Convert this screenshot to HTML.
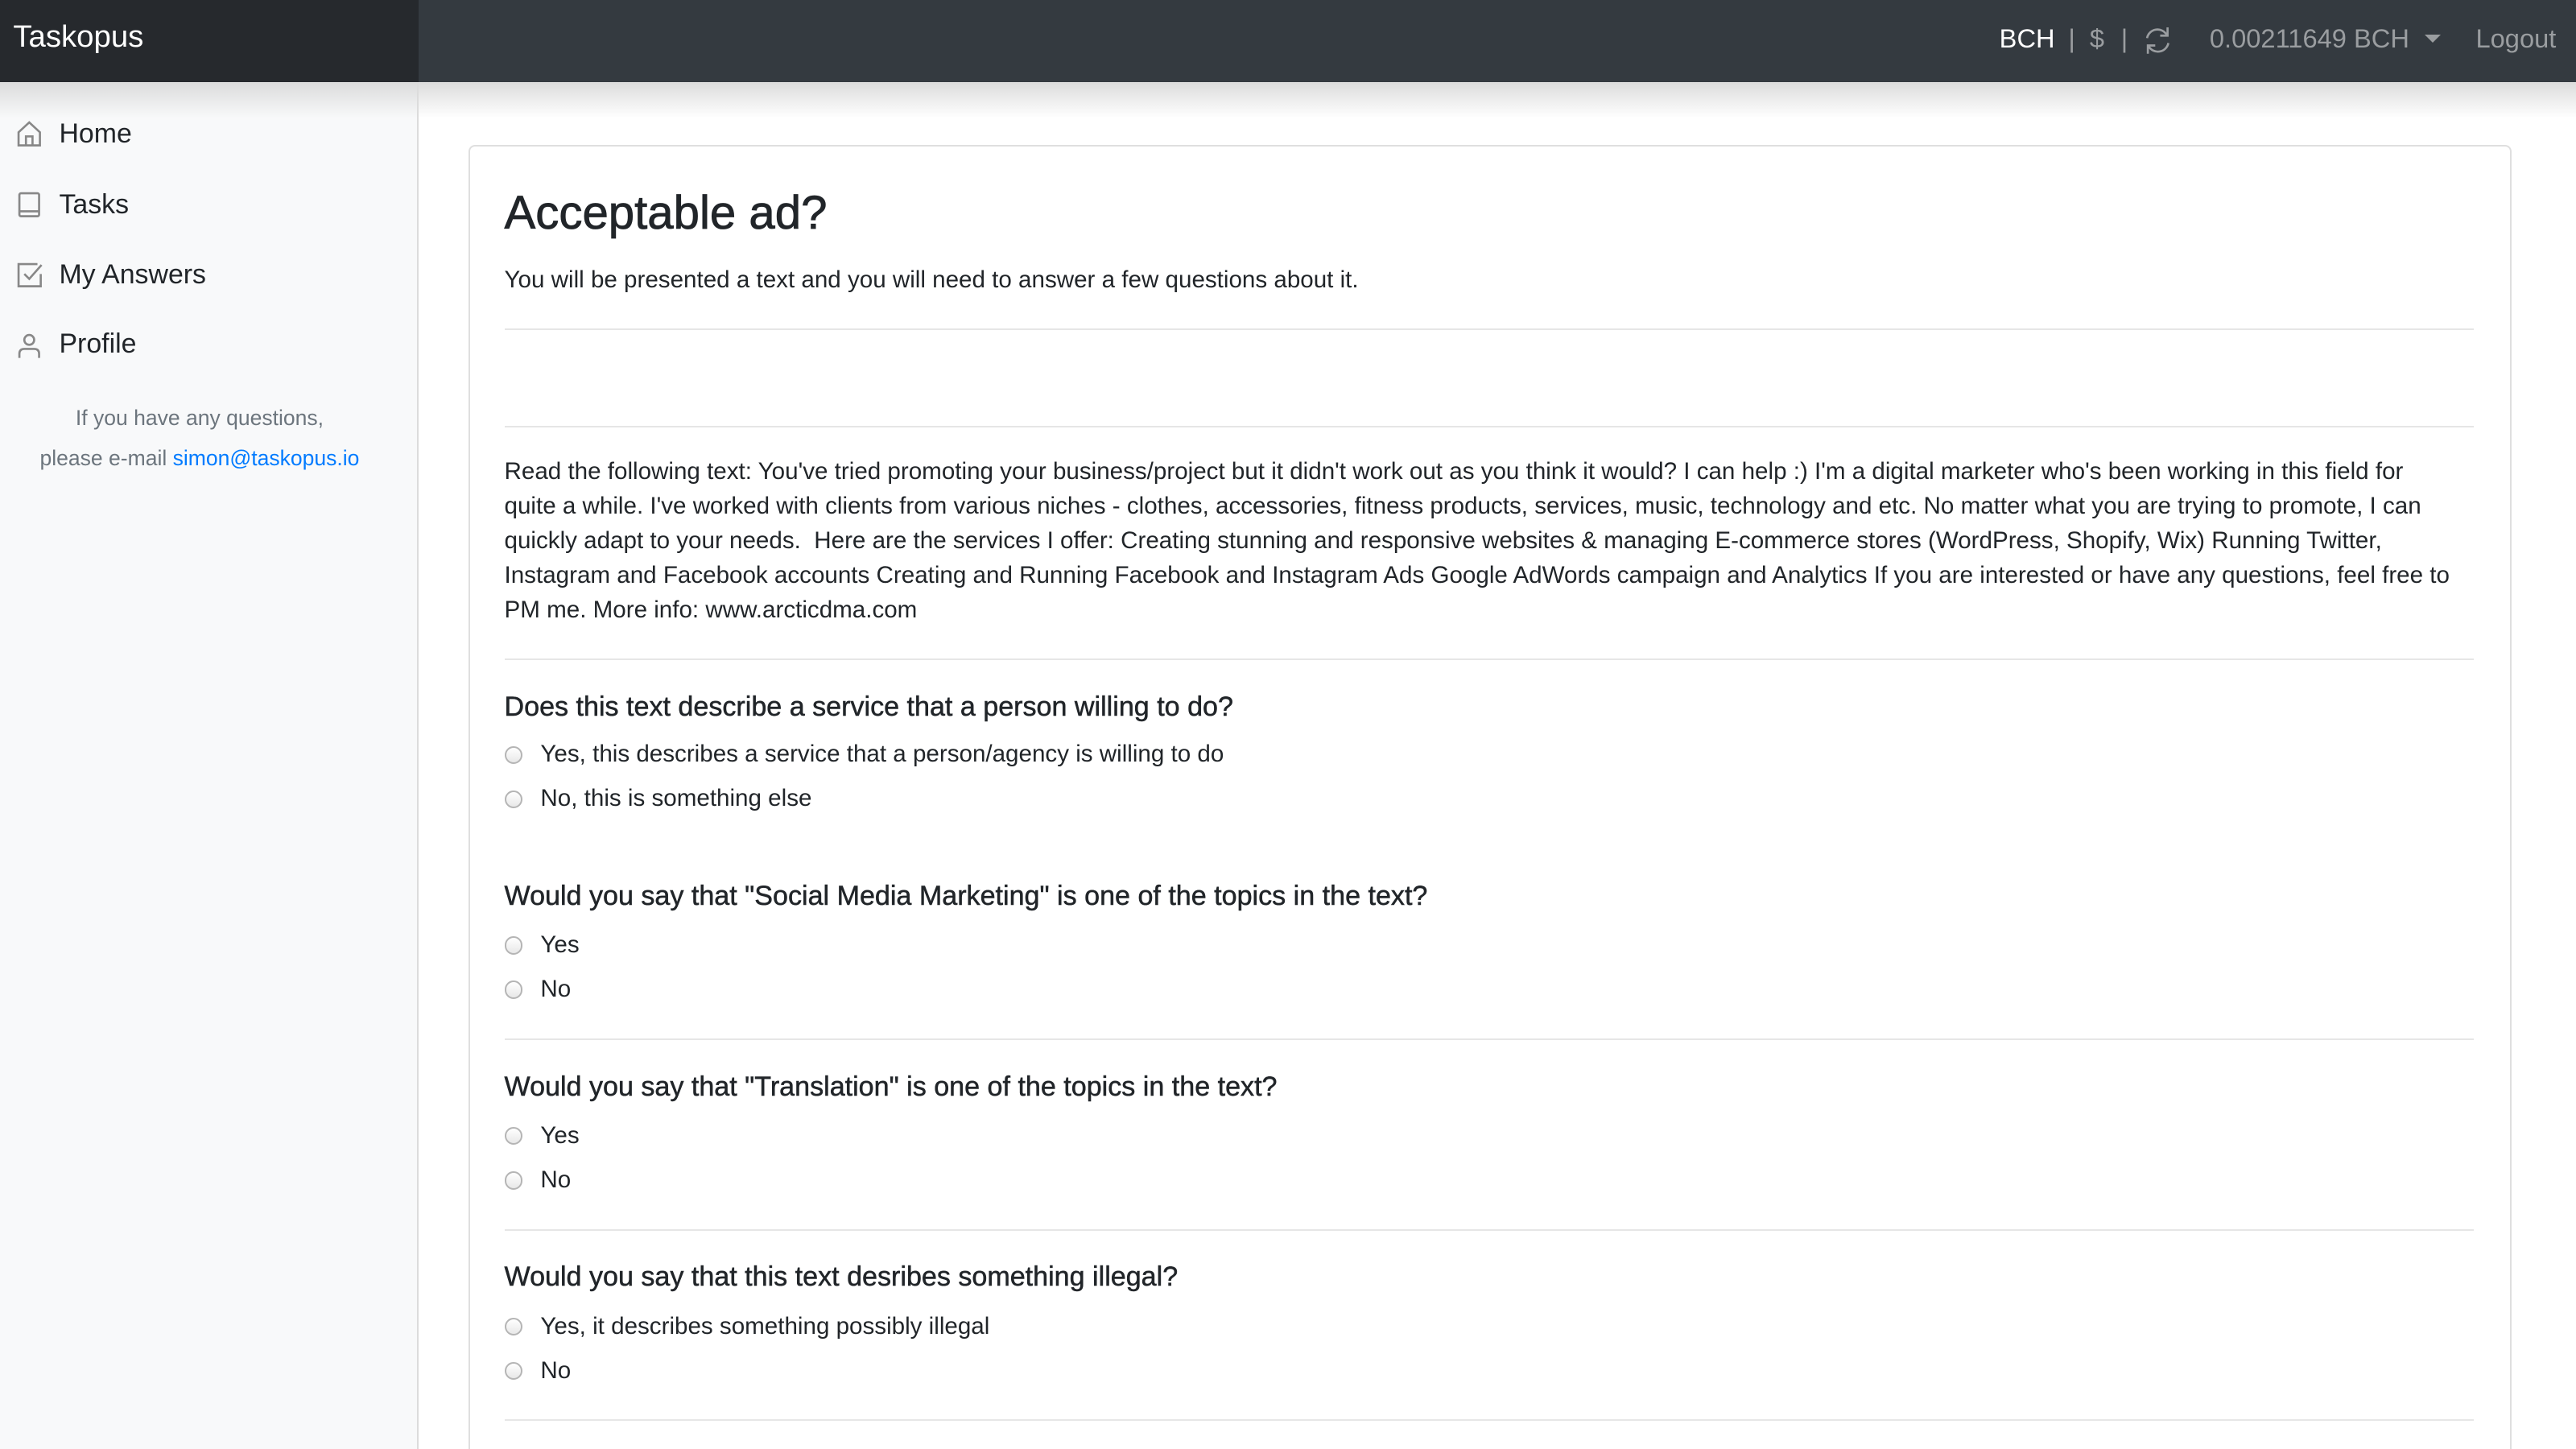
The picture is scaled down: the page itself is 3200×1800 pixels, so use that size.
<!DOCTYPE html>
<html><head><meta charset="utf-8"><style>
html{zoom:2.040816;height:882px;overflow:hidden}
*{margin:0;padding:0;box-sizing:border-box}
body{width:1568px;height:882px;overflow:hidden;background:#fff;font-family:"Liberation Sans",Arial,sans-serif;color:#212529;position:relative}
.top{position:absolute;left:0;top:0;width:1568px;height:50px;background:#343a40}
.brand{position:absolute;left:0;top:0;width:255px;height:50px;background:#26292d;color:#fff;font-size:18.8px;padding:12px 8px}
.shadow{position:absolute;left:0;top:50px;width:1568px;height:22px;background:linear-gradient(#dcdcdc,rgba(255,255,255,0));}
.side{position:absolute;left:0;top:50px;width:255px;height:832px;background:#f8f9fa;border-right:1px solid #dcdcdc}
.side .sh{position:absolute;left:0;top:0;width:254px;height:22px;background:linear-gradient(rgba(200,200,200,.6),rgba(248,249,250,0))}
.nav{position:absolute;left:36px;font-size:16.6px;color:#212529}
.ic{position:absolute;left:10px}
.help{position:absolute;left:0;width:243px;text-align:center;font-size:13px;color:#6c757d;line-height:24.5px;top:242px}
.help a{color:#007bff;text-decoration:none}
.tr{position:absolute;top:14px;font-size:16px;color:#9a9da0}
.card{position:absolute;left:285px;top:88px;width:1244px;height:820px;border:1px solid #dfdfdf;border-radius:4px;background:#fff}
.t{position:absolute;left:307px;white-space:nowrap}
.hr{position:absolute;left:307px;width:1199px;height:1px;background:#e6e6e6}
.p{font-size:14.5px;line-height:21px}
.q{font-size:16.7px;color:#212529;-webkit-text-stroke:0.25px #212529}
.r{position:absolute;left:307px;width:11px;height:11px;border-radius:50%;border:1px solid #b5b5b5;background:linear-gradient(#fff,#e8e8e8)}
</style></head><body>
<div class="top"></div>
<div class="brand">Taskopus</div>
<div class="shadow"></div>
<div class="side"><div class="sh"></div></div>

<svg class="ic" style="top:73px" width="16" height="17" viewBox="0 0 16 17" fill="none" stroke="#888" stroke-width="1.3"><path d="M1.5 7.5 L8 1.5 L14.5 7.5 V15.5 H1.5 Z"/><path d="M6 15.5 V10 H10 V15.5"/></svg>
<div class="nav" style="top:72px">Home</div>
<svg class="ic" style="top:116px" width="16" height="17" viewBox="0 0 16 17" fill="none" stroke="#888" stroke-width="1.3"><rect x="2" y="1.5" width="12" height="14" rx="1"/><path d="M2 12.5 H14"/></svg>
<div class="nav" style="top:115px">Tasks</div>
<svg class="ic" style="top:159px" width="17" height="17" viewBox="0 0 17 17" fill="none" stroke="#888" stroke-width="1.3"><path d="M13 2 H1.5 V15.5 H15 V8"/><path d="M5 8 L8 11 L15.5 2.5"/></svg>
<div class="nav" style="top:158px">My Answers</div>
<svg class="ic" style="top:202px" width="16" height="17" viewBox="0 0 16 17" fill="none" stroke="#888" stroke-width="1.3"><circle cx="8" cy="5" r="3"/><path d="M2 16 V13.5 Q2 10.5 5 10.5 H11 Q14 10.5 14 13.5 V16"/></svg>
<div class="nav" style="top:200px">Profile</div>
<div class="help">If you have any questions,<br>please e-mail <a>simon@taskopus.io</a></div>

<div class="tr" style="left:1217px;color:#fff">BCH</div>
<div class="tr" style="left:1259px">|</div>
<div class="tr" style="left:1272px">$</div>
<div class="tr" style="left:1291px">|</div>
<svg style="position:absolute;left:1304px;top:15px" width="19" height="19" viewBox="0 0 19 19" fill="none" stroke="#9a9da0" stroke-width="1.3"><path d="M3 8 A6.5 6.5 0 0 1 15 6"/><path d="M15.5 1.5 V6.5 H11"/><path d="M16 11 A6.5 6.5 0 0 1 4 13"/><path d="M3.5 17.5 V12.5 H8"/></svg>
<div class="tr" style="left:1345px">0.00211649 BCH</div>
<div style="position:absolute;left:1476px;top:21px;border-left:5px solid transparent;border-right:5px solid transparent;border-top:5px solid #9a9da0"></div>
<div class="tr" style="left:1507px">Logout</div>

<div class="card"></div>
<div class="t" style="top:113px;font-size:28.5px;-webkit-text-stroke:0.4px #212529">Acceptable ad?</div>
<div class="t p" style="top:160px">You will be presented a text and you will need to answer a few questions about it.</div>
<div class="hr" style="top:200px"></div>
<div class="hr" style="top:259px"></div>
<div class="t p" style="top:277px">Read the following text: You've tried promoting your business/project but it didn't work out as you think it would? I can help :) I'm a digital marketer who's been working in this field for<br>quite a while. I've worked with clients from various niches - clothes, accessories, fitness products, services, music, technology and etc. No matter what you are trying to promote, I can<br>quickly adapt to your needs.&nbsp; Here are the services I offer: Creating stunning and responsive websites &amp; managing E-commerce stores (WordPress, Shopify, Wix) Running Twitter,<br>Instagram and Facebook accounts Creating and Running Facebook and Instagram Ads Google AdWords campaign and Analytics If you are interested or have any questions, feel free to<br>PM me. More info: www.arcticdma.com</div>
<div class="hr" style="top:401px"></div>

<div class="t q" style="top:421px">Does this text describe a service that a person willing to do?</div>
<div class="r" style="top:454px"></div><div class="t p" style="left:329px;top:449px">Yes, this describes a service that a person/agency is willing to do</div>
<div class="r" style="top:481px"></div><div class="t p" style="left:329px;top:476px">No, this is something else</div>

<div class="t q" style="top:536px">Would you say that "Social Media Marketing" is one of the topics in the text?</div>
<div class="r" style="top:570px"></div><div class="t p" style="left:329px;top:565px">Yes</div>
<div class="r" style="top:597px"></div><div class="t p" style="left:329px;top:592px">No</div>
<div class="hr" style="top:632px"></div>

<div class="t q" style="top:652px">Would you say that "Translation" is one of the topics in the text?</div>
<div class="r" style="top:686px"></div><div class="t p" style="left:329px;top:681px">Yes</div>
<div class="r" style="top:713px"></div><div class="t p" style="left:329px;top:708px">No</div>
<div class="hr" style="top:748px"></div>

<div class="t q" style="top:768px">Would you say that this text desribes something illegal?</div>
<div class="r" style="top:802px"></div><div class="t p" style="left:329px;top:797px">Yes, it describes something possibly illegal</div>
<div class="r" style="top:829px"></div><div class="t p" style="left:329px;top:824px">No</div>
<div class="hr" style="top:864px"></div>
</body></html>
